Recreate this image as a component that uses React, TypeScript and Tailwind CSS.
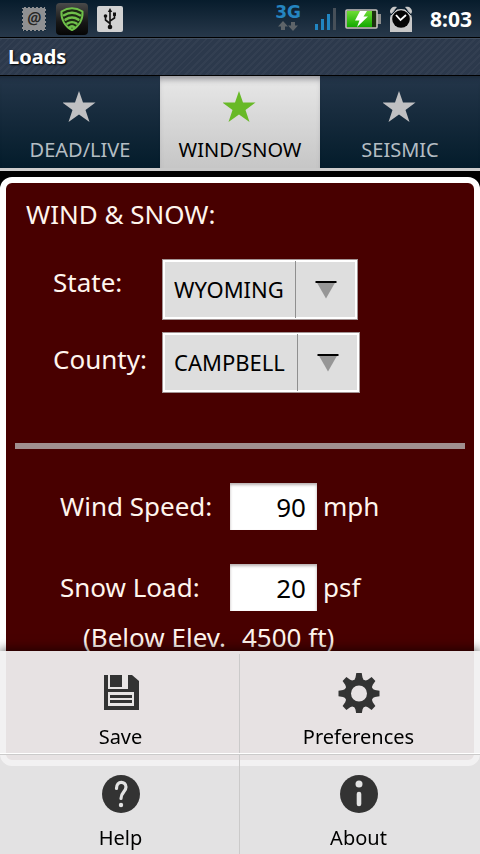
import type { ReactNode } from 'react'
import { clsx } from 'clsx'

function StatusBar() {
  return (
    <header className="flex h-[38px] items-center border-b border-black bg-linear-to-b from-[#071c2c] to-[#27384a] pr-2 pl-[22px] text-white">
      <svg className="h-6 w-6" viewBox="0 0 24 24" aria-hidden="true">
        <rect width="24" height="24" fill="#8f9092" />
        <rect x="0" y="0" width="24" height="24" fill="none" stroke="#14293a" strokeWidth="2" strokeDasharray="2 2" />
        <text x="12" y="17" textAnchor="middle" fontSize="16" fontWeight="600" fontStyle="italic" fontFamily="Noto Sans, sans-serif" fill="#262625">@</text>
      </svg>
      <svg className="ml-[10px] h-8 w-8" viewBox="0 0 32 32" aria-hidden="true">
        <defs>
          <linearGradient id="tile" x1="0" y1="0" x2="0" y2="1">
            <stop offset="0" stopColor="#4a4a4a" />
            <stop offset="0.6" stopColor="#171717" />
            <stop offset="1" stopColor="#050505" />
          </linearGradient>
        </defs>
        <rect width="32" height="32" rx="4" fill="url(#tile)" />
        <path d="M5.500 8.500C12 4.500 20 4.500 26.500 8.500 27 16.500 23 23.500 16 27 9 23.500 5 16.500 5.500 8.500Z" fill="#1c2a14" stroke="#6fc04a" strokeWidth="2" strokeLinejoin="round" />
        <path d="M8 12.300C13 9.200 19 9.200 24 12.300M9.500 16.600C13.500 14 18.500 14 22.500 16.600M11.500 20.600C14 18.800 18 18.800 20.500 20.600M14 24C15.300 23.200 16.700 23.200 18 24" fill="none" stroke="#6fc04a" strokeWidth="2.500" strokeLinecap="round" />
      </svg>
      <svg className="ml-[9px] h-[26px] w-[26px]" viewBox="0 0 26 26" aria-hidden="true">
        <rect width="26" height="26" rx="2" fill="#d2d2d2" />
        <path d="M13 4V21M13 17.500L8.500 14V10.500M13 15L17.500 12V8.500" fill="none" stroke="#111" strokeWidth="1.600" />
        <path d="M13 2L15.200 6H10.800Z" fill="#111" />
        <circle cx="13" cy="21" r="2.300" fill="#111" />
        <circle cx="8.500" cy="10" r="1.800" fill="#111" />
        <rect x="16" y="6.500" width="3" height="3.400" fill="#111" />
      </svg>
      <div className="ml-auto flex items-center">
        <div className="flex flex-col items-center gap-[3px]">
          <span className="font-['DejaVu_Sans'] text-[17px] leading-3 font-bold text-[#2585c0]">3G</span>
          <svg className="h-[10px] w-5" viewBox="0 0 20 10" fill="#5d6469" aria-hidden="true">
            <path d="M5 0L10 5.500H7V9H3V5.500H0Z" />
            <path d="M15 10L10 4.500H13V1H17V4.500H20Z" />
          </svg>
        </div>
        <svg className="ml-[13px] h-[22px] w-[22px]" viewBox="0 0 22 22" aria-hidden="true">
          <path d="M1 16H4V22H1ZM7 11H10V22H7ZM13 6H16V22H13Z" fill="#2186c2" />
          <path d="M19 0H22V22H19Z" fill="#475059" />
        </svg>
        <svg className="ml-[9px] h-5 w-9" viewBox="0 0 36 20" aria-hidden="true">
          <defs>
            <linearGradient id="charge" x1="0" y1="0" x2="0" y2="1">
              <stop offset="0" stopColor="#6fdc35" />
              <stop offset="1" stopColor="#12a900" />
            </linearGradient>
          </defs>
          <rect x="32" y="5" width="4" height="10" fill="#8d8d8d" />
          <rect x="1" y="1" width="31" height="18" rx="1" fill="#1d3010" stroke="#c9c3c1" strokeWidth="1.600" />
          <rect x="2" y="2" width="25" height="16" fill="url(#charge)" />
          <path d="M15 2H22L18.500 7.500H23L12 18 14.500 11.500H10Z" fill="#fff" />
        </svg>
        <svg className="ml-[9px] h-[26px] w-[22px]" viewBox="0 0 22 26" aria-hidden="true">
          <path d="M0 6C0 2 3 0 7 1L1 8ZM22 6C22 2 19 0 15 1L21 8Z" fill="#c8c8c8" />
          <path d="M0 26V12C1 6 5 3 11 3S21 6 22 12V26Z" fill="#c8c8c8" />
          <path d="M1 9L7 3M21 9L15 3" stroke="#14222d" strokeWidth="1" />
          <circle cx="11" cy="13" r="8.800" fill="#050505" />
          <path d="M6 9L10.500 14 16 9" fill="none" stroke="#fff" strokeWidth="1.800" />
        </svg>
        <time className="ml-[18px] text-[21px] leading-6 font-bold">8:03</time>
      </div>
    </header>
  )
}

function Tab({ label, active = false }: { label: string; active?: boolean }) {
  return (
    <button
      type="button"
      role="tab"
      aria-selected={active}
      className={clsx(
        'flex flex-1 flex-col items-center border-b-[3px] pt-[15px] pb-1 text-xl leading-7',
        active
          ? 'border-[#c9c9c9] bg-linear-to-b from-[#e8e8e8] to-[#c6c6c6] text-black shadow-[inset_0_6px_6px_-3px_#8f8f95]'
          : 'border-[#cdcdcd] bg-linear-to-b from-[#24364a] to-[#041c2b] text-[#b4bdc3] shadow-[inset_0_6px_6px_-6px_#15202d]',
      )}
    >
      <svg className={clsx('mb-[13px] h-8 w-[34px]', active ? 'text-[#68b927]' : 'text-[#c0c0c2]')} viewBox="0 0 34 32" fill="currentColor" aria-hidden="true">
        <path d="M16 0L20 11.500H32.500L22.500 19 26.500 31 16 23.500 5.500 31 9.500 19 -0.500 11.500H12Z" />
      </svg>
      {label}
    </button>
  )
}

function Spinner({ id, value, className }: { id: string; value: string; className: string }) {
  return (
    <div className={clsx('relative border border-[#a39494] bg-white p-[2px]', className)}>
      <select id={id} defaultValue={value} className="block h-[55px] w-full appearance-none bg-[#dedede] pb-[2px] pl-[9px] text-[22px] text-black">
        <option>{value}</option>
      </select>
      <div className="pointer-events-none absolute inset-y-px right-[2px] flex w-[60px] items-center justify-center border-l border-[#8f8f8f]">
        <svg className="h-[18px] w-[22px]" viewBox="0 0 22 18" aria-hidden="true">
          <path d="M1 0H21L11 17.500Z" fill="#969696" />
          <path d="M0.500 0H21.500V2H0.500Z" fill="#000" />
        </svg>
      </div>
    </div>
  )
}

function NumberRow({ id, label, value, unit }: { id: string; label: string; value: string; unit: string }) {
  return (
    <div className="flex items-center pl-[54px]">
      <label htmlFor={id} className="w-[170px] pb-[2px]">{label}</label>
      <input
        id={id}
        type="text"
        inputMode="numeric"
        defaultValue={value}
        className="h-[47px] w-[87px] bg-white pr-[11px] text-right text-black shadow-[inset_0_2px_3px_#b8b0b0]"
      />
      <span className="ml-[6px] pb-[2px]">{unit}</span>
    </div>
  )
}

function MenuItem({ label, children }: { label: string; children: ReactNode }) {
  return (
    <button type="button" className="flex flex-1 flex-col items-center pt-[19px] pb-[2px] text-xl leading-7 text-black">
      <svg className="mb-[10px] h-10 w-[42px]" viewBox="0 0 42 40" fill="#333" aria-hidden="true">
        {children}
      </svg>
      {label}
    </button>
  )
}

function OptionsMenu() {
  return (
    <nav className="fixed inset-x-0 bottom-0 bg-[#f1f0f1]/94 pt-[3px] shadow-[0_-2px_10px_#00000090]">
      <div className="flex divide-x divide-[#cbcaca] border-b border-white pr-[3px] pl-[2px]">
        <MenuItem label="Save">
          <path d="M4 2H32L39 8V37H4Z" />
          <path d="M8 2H10V14H22V2H28V16H8ZM8 19H34V33H8Z" fill="#e8e5e5" />
          <path d="M10 22H32V25H10ZM10 27H32V30H10Z" />
        </MenuItem>
        <MenuItem label="Preferences">
          <g>
            {[0, 45, 90, 135, 180, 225, 270, 315].map((angle) => (
              <path key={angle} d="M18.300 0H23.700L24.500 4.500Q25 7 27.500 8L25 11H17L14.500 8Q17 7 17.500 4.500Z" transform={`rotate(${angle} 21 20.500)`} />
            ))}
          </g>
          <circle cx="21" cy="20.500" r="11" fill="none" stroke="#333" strokeWidth="6" />
        </MenuItem>
      </div>
      <div className="flex divide-x divide-[#cbcaca] border-t border-[#cbcaca] pr-[3px] pl-[2px]">
        <MenuItem label="Help">
          <circle cx="21" cy="20" r="19" />
          <path d="M16.500 14.500C16.500 6 26 7 26 13 26 18 21 18 21 24.500" fill="none" stroke="#e3e3e3" strokeWidth="3.200" strokeLinecap="round" />
          <circle cx="21" cy="31" r="2.200" fill="#e3e3e3" />
        </MenuItem>
        <MenuItem label="About">
          <circle cx="21" cy="20" r="19" />
          <circle cx="21" cy="10" r="3.500" fill="#e3e3e3" />
          <path d="M21 20V30" fill="none" stroke="#e3e3e3" strokeWidth="4.600" strokeLinecap="round" />
        </MenuItem>
      </div>
    </nav>
  )
}

export default function App() {
  return (
    <div className="min-h-screen bg-black font-['Noto_Sans',sans-serif]">
      <StatusBar />
      <div className="h-[38px] border-t border-b border-t-[#414f60] border-b-black bg-[#2c394c] bg-[repeating-linear-gradient(135deg,#ffffff08_0_2px,transparent_2px_5px)] px-2">
        <h1 className="text-xl leading-9 font-bold text-white [text-shadow:1px_1px_2px_#000]">Loads</h1>
      </div>
      <div role="tablist" className="flex">
        <Tab label="DEAD/LIVE" />
        <Tab label="WIND/SNOW" active />
        <Tab label="SEISMIC" />
      </div>
      <main className="mt-[6px] rounded-xl border-[6px] border-white bg-[#480000] pb-[107px] text-[26px] leading-8 text-[#fff5ee]">
        <h2 className="px-5 pt-[15px]">WIND &amp; SNOW:</h2>
        <div className="mt-[29px] flex flex-col gap-3 pl-[47px]">
          <div className="flex items-start">
            <label htmlFor="state" className="w-[109px] pt-[7px]">State:</label>
            <Spinner id="state" value="WYOMING" className="w-[196px]" />
          </div>
          <div className="flex items-start">
            <label htmlFor="county" className="w-[109px] pt-[11px]">County:</label>
            <Spinner id="county" value="CAMPBELL" className="w-[198px]" />
          </div>
        </div>
        <hr className="mx-[9px] mt-[50px] h-[6px] border-0 bg-[#a08f8f]" />
        <div className="mt-[34px] flex flex-col gap-[34px]">
          <NumberRow id="wind" label="Wind Speed:" value="90" unit="mph" />
          <NumberRow id="snow" label="Snow Load:" value="20" unit="psf" />
        </div>
        <p className="mt-[10px] flex gap-4 pl-[77px]">
          <span>(Below Elev.</span>
          <span>4500 ft)</span>
        </p>
      </main>
      <OptionsMenu />
    </div>
  )
}
